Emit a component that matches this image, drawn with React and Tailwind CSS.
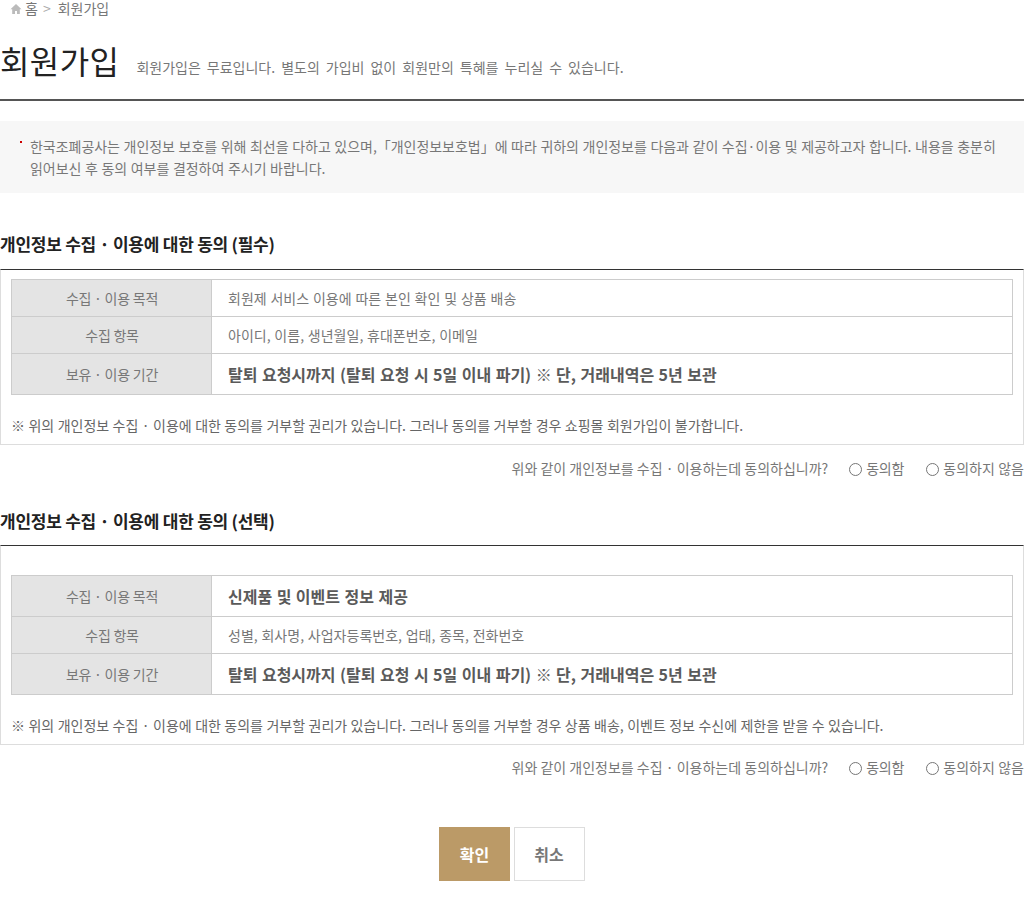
const FONT = "font-['Noto_Sans_CJK_KR','Noto_Sans',sans-serif]";

function Row({ label, children, bold, h }) {
  return (
    <tr className={h}>
      <th className="w-[200px] border border-[#cccccc] bg-[#e4e4e4] pl-[1px] text-center text-[14px] font-normal tracking-[-0.25px] text-[#777777]">{label}</th>
      <td className={`border border-[#cccccc] pl-4 text-left ${bold ? "text-[16px] font-bold text-[#5a5a5a] [word-spacing:0.85px]" : "text-[14px] text-[#777777] [word-spacing:0.7px]"}`}>{children}</td>
    </tr>
  );
}

function Agree({ name, mt }) {
  return (
    <div className={`${mt} flex h-[20px] items-center justify-end text-[14px] text-[#777777]`}>
      <span>위와 같이 개인정보를 수집 · 이용하는데 동의하십니까?</span>
      <label className="ml-[21px] flex items-center">
        <input type="radio" name={name} className="m-0 mr-[4px] mt-[3px] h-[13px] w-[13px]" />
        <span className="tracking-[-0.2px]">동의함</span>
      </label>
      <label className="ml-[22px] flex items-center">
        <input type="radio" name={name} className="m-0 mr-[4px] mt-[3px] h-[13px] w-[13px]" />
        <span className="tracking-[0.05px]">동의하지 않음</span>
      </label>
    </div>
  );
}

function Section({ title, top, rows, note, mt, gap }) {
  return (
    <section className={mt}>
      <h3 className="h-[24px] text-[17px] leading-[24px] font-bold tracking-[-0.25px] text-[#222222]">{title}</h3>
      <div className={`${gap} border border-t-[#333333] border-x-[#dddddd] border-b-[#dddddd] px-[10px] ${top}`}>
        <table className="w-[1002px] table-fixed border-collapse border border-[#cccccc]">
          <colgroup>
            <col className="w-[200px]" />
            <col />
          </colgroup>
          <tbody>{rows}</tbody>
        </table>
        <p className="mt-[20px] mb-[9px] text-[14px] leading-[20px] text-[#666666] [word-spacing:0.3px]">{note}</p>
      </div>
    </section>
  );
}

export default function App() {
  return (
    <div className={`${FONT} min-h-[901px] w-[1024px] bg-white`}>
      <nav className="flex h-[17px] items-center text-[14px] text-[#777777]">
        <svg viewBox="0 0 12 12" className="ml-[10px] mr-[3px] h-[12px] w-[12px]" fill="#bbbbbb">
          <path d="M6 1 0.5 6.2H2.2V11H5V8H7V11H9.8V6.2H11.5Z" />
        </svg>
        <span>홈</span>
        <span className="ml-[5px] text-[#aaaaaa]">&gt;</span>
        <span className="ml-[7px]">회원가입</span>
      </nav>
      <header className="flex h-[84px] items-start border-b-2 border-[#555555]">
        <h2 className="mt-[20px] text-[32px] leading-[46px] font-normal tracking-[0.4px] text-[#222222]">회원가입</h2>
        <p className="ml-[17px] mt-[40px] text-[14px] leading-[20px] text-[#777777] [word-spacing:2.9px]">회원가입은 무료입니다. 별도의 가입비 없이 회원만의 특혜를 누리실 수 있습니다.</p>
      </header>
      <div className="relative mt-[20px] h-[72px] bg-[#f7f7f7] pl-[30px] pr-[24px] pt-[14px] text-[14px] leading-[22px] tracking-[-0.03px] text-[#777777] [word-spacing:0.5px]">
        <span className="absolute left-[20px] top-[20px] h-[2px] w-[2px] bg-[#cc0000]" />
        한국조폐공사는 개인정보 보호를 위해 최선을 다하고 있으며,「개인정보보호법」에 따라 귀하의 개인정보를 다음과 같이 수집·이용 및 제공하고자 합니다. 내용을 충분히 읽어보신 후 동의 여부를 결정하여 주시기 바랍니다.
      </div>
      <Section
        mt="mt-[39px]"
        gap="mt-[13px]"
        title="개인정보 수집 · 이용에 대한 동의 (필수)"
        top="pt-[9px]"
        note="※ 위의 개인정보 수집 · 이용에 대한 동의를 거부할 권리가 있습니다. 그러나 동의를 거부할 경우 쇼핑몰 회원가입이 불가합니다."
        rows={
          <>
            <Row label="수집 · 이용 목적" h="h-[37px]">회원제 서비스 이용에 따른 본인 확인 및 상품 배송</Row>
            <Row label="수집 항목" h="h-[37px]">아이디, 이름, 생년월일, 휴대폰번호, 이메일</Row>
            <Row label="보유 · 이용 기간" h="h-[41px]" bold>탈퇴 요청시까지 (탈퇴 요청 시 5일 이내 파기) ※ 단, 거래내역은 5년 보관</Row>
          </>
        }
      />
      <Agree name="a1" mt="mt-[13px]" />
      <Section
        mt="mt-[31px]"
        gap="mt-[12px]"
        title="개인정보 수집 · 이용에 대한 동의 (선택)"
        top="pt-[29px]"
        note="※ 위의 개인정보 수집 · 이용에 대한 동의를 거부할 권리가 있습니다. 그러나 동의를 거부할 경우 상품 배송, 이벤트 정보 수신에 제한을 받을 수 있습니다."
        rows={
          <>
            <Row label="수집 · 이용 목적" h="h-[41px]" bold>신제품 및 이벤트 정보 제공</Row>
            <Row label="수집 항목" h="h-[37px]">성별, 회사명, 사업자등록번호, 업태, 종목, 전화번호</Row>
            <Row label="보유 · 이용 기간" h="h-[41px]" bold>탈퇴 요청시까지 (탈퇴 요청 시 5일 이내 파기) ※ 단, 거래내역은 5년 보관</Row>
          </>
        }
      />
      <Agree name="a2" mt="mt-[12px]" />
      <div className="mt-[50px] flex justify-center gap-[4px] pr-[1px]">
        <button className="h-[54px] w-[71px] bg-[#bb9a67] pl-[1px] text-[16px] font-bold text-white">확인</button>
        <button className="h-[54px] w-[71px] border border-[#dddddd] bg-white text-[16px] font-bold text-[#777777]">취소</button>
      </div>
    </div>
  );
}
